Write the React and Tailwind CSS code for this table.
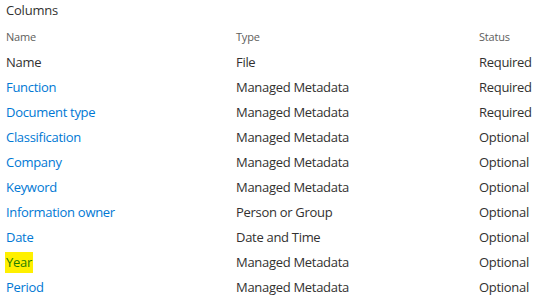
const rows = [
  { name: "Name", type: "File", status: "Required", link: false },
  { name: "Function", type: "Managed Metadata", status: "Required", link: true },
  { name: "Document type", type: "Managed Metadata", status: "Required", link: true },
  { name: "Classification", type: "Managed Metadata", status: "Optional", link: true },
  { name: "Company", type: "Managed Metadata", status: "Optional", link: true },
  { name: "Keyword", type: "Managed Metadata", status: "Optional", link: true },
  { name: "Information owner", type: "Person or Group", status: "Optional", link: true },
  { name: "Date", type: "Date and Time", status: "Optional", link: true },
  { name: "Year", type: "Managed Metadata", status: "Optional", link: true, mark: true },
  { name: "Period", type: "Managed Metadata", status: "Optional", link: true },
];

const App = () => {
  return (
    <div className="w-[546px] h-[305px] bg-white font-['Segoe_UI','Open_Sans','Liberation_Sans',sans-serif] text-[#323130] overflow-hidden">
      <div className="h-[20px] leading-[20px] text-[13px] tracking-[-0.2px] pl-[6px]">Columns</div>

      <div className="mt-[5px] grid grid-cols-[230px_243px_1fr] pl-[6px] h-[25px] items-center text-[11px] tracking-[-0.2px] text-[#605e5c]">
        <div>Name</div>
        <div>Type</div>
        <div>Status</div>
      </div>

      {rows.map((r) => (
        <div
          key={r.name}
          className="grid grid-cols-[230px_243px_1fr] pl-[6px] h-[25px] items-center text-[13px] tracking-[-0.3px]"
        >
          <div>
            {r.mark ? (
              <span className="inline-block -ml-px px-px leading-[21px] bg-[#fff000] text-[#1f7f00]">
                {r.name}
              </span>
            ) : (
              <span className={r.link ? "text-[#0078d4]" : ""}>{r.name}</span>
            )}
          </div>
          <div>{r.type}</div>
          <div>{r.status}</div>
        </div>
      ))}
    </div>
  );
};

export default App;
